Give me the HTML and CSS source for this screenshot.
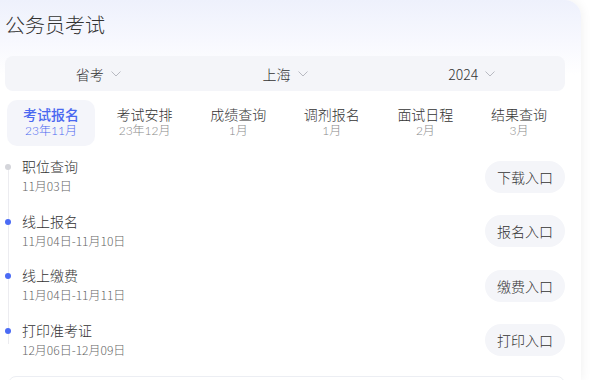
FILE: index.html
```html
<!DOCTYPE html>
<html lang="zh-CN">
<head>
  <meta charset="UTF-8">
  <meta name="viewport" content="width=device-width, initial-scale=1.0">
  <link rel="stylesheet" href="styles.css">
  <title>公务员考试</title>
</head>
<body>
  <div class="card">
    <h2 class="title">公务员考试</h2>

    <div class="filters">
      <div class="filter">省考
        <svg class="caret" viewBox="0 0 10 6"><path d="M0.5 0.5 L5 5 L9.5 0.5" /></svg>
      </div>
      <div class="filter">上海
        <svg class="caret" viewBox="0 0 10 6"><path d="M0.5 0.5 L5 5 L9.5 0.5" /></svg>
      </div>
      <div class="filter">2024
        <svg class="caret" viewBox="0 0 10 6"><path d="M0.5 0.5 L5 5 L9.5 0.5" /></svg>
      </div>
    </div>

    <div class="tabs">
      <div class="tab active">
        <div class="tab-name">考试报名</div>
        <div class="tab-date">23年11月</div>
      </div>
      <div class="tab">
        <div class="tab-name">考试安排</div>
        <div class="tab-date">23年12月</div>
      </div>
      <div class="tab">
        <div class="tab-name">成绩查询</div>
        <div class="tab-date">1月</div>
      </div>
      <div class="tab">
        <div class="tab-name">调剂报名</div>
        <div class="tab-date">1月</div>
      </div>
      <div class="tab">
        <div class="tab-name">面试日程</div>
        <div class="tab-date">2月</div>
      </div>
      <div class="tab">
        <div class="tab-name">结果查询</div>
        <div class="tab-date">3月</div>
      </div>
    </div>

    <ul class="steps">
      <li class="step">
        <span class="dot done"></span>
        <div class="step-info">
          <div class="step-name">职位查询</div>
          <div class="step-date">11月03日</div>
        </div>
        <button class="step-btn">下载入口</button>
      </li>
      <li class="step">
        <span class="dot"></span>
        <div class="step-info">
          <div class="step-name">线上报名</div>
          <div class="step-date">11月04日-11月10日</div>
        </div>
        <button class="step-btn">报名入口</button>
      </li>
      <li class="step">
        <span class="dot"></span>
        <div class="step-info">
          <div class="step-name">线上缴费</div>
          <div class="step-date">11月04日-11月11日</div>
        </div>
        <button class="step-btn">缴费入口</button>
      </li>
      <li class="step">
        <span class="dot"></span>
        <div class="step-info">
          <div class="step-name">打印准考证</div>
          <div class="step-date">12月06日-12月09日</div>
        </div>
        <button class="step-btn">打印入口</button>
      </li>
    </ul>

    <div class="more"></div>
  </div>
</body>
</html>
```

FILE: styles.css
```css
body {
  margin: 0;
  background-color: #fff;
  font-family: 'Noto Sans CJK SC', sans-serif;
  font-weight: 300;
  color: #333;
}

.card {
  width: 581px;
  box-sizing: border-box;
  padding: 11px 16px 0 5px;
  border-radius: 0 16px 0 0;
  background: linear-gradient(180deg, #eef1fc 0, #f7f8fe 40px, #fff 75px);
  box-shadow: 0 0 12px rgba(0, 0, 0, 0.07);
  overflow: hidden;
  height: 380px;
}

.title {
  margin: 0;
  font-size: 20px;
  line-height: 28px;
  font-weight: 300;
  color: #333;
}

.filters {
  display: flex;
  margin-top: 17px;
  height: 35px;
  border-radius: 8px;
  background-color: #f4f5f9;
}

.filter {
  flex: 1;
  display: flex;
  align-items: center;
  justify-content: center;
  font-size: 14px;
  color: #333;
}

.caret {
  width: 10px;
  height: 6px;
  margin-left: 7px;
  fill: none;
  stroke: #b8bac2;
  stroke-width: 1;
}

.tabs {
  display: flex;
  justify-content: space-between;
  margin-top: 9px;
  padding: 0 2px;
  font-family: 'Lato', 'Noto Sans CJK SC', sans-serif;
}

.tab {
  width: 88px;
  padding: 6px 0 8px;
  border-radius: 10px;
  text-align: center;
}

.tab-name {
  font-size: 14px;
  line-height: 18px;
  color: #333;
}

.tab-date {
  font-size: 12px;
  line-height: 14px;
  color: #888;
}

.tab.active {
  background-color: #f4f5fa;
}

.tab.active .tab-name {
  color: #4a68f0;
  font-weight: 500;
}

.tab.active .tab-date {
  color: #4a68f0;
}

.steps {
  list-style: none;
  margin: 10px 0 0;
  padding: 0;
  background: linear-gradient(#ececf0, #ececf0) no-repeat 2.5px 10px / 1px calc(100% - 40px);
}

.step {
  display: flex;
  align-items: center;
  padding-bottom: 14.5px;
}

.dot {
  align-self: flex-start;
  width: 6px;
  height: 6px;
  margin: 8px 11px 0 0;
  border-radius: 50%;
  background-color: #4b6bf5;
  flex-shrink: 0;
}

.dot.done {
  background-color: #d4d5da;
}

.step-info {
  flex: 1;
}

.step-name {
  font-size: 14px;
  line-height: 20px;
  color: #333;
}

.step-date {
  font-size: 12px;
  line-height: 20px;
  color: #666;
}

.step-btn {
  width: 80px;
  height: 32px;
  margin-top: 1px;
  border: none;
  border-radius: 16px;
  background-color: #f4f5f9;
  color: #333;
  font-family: inherit;
  font-weight: 300;
  font-size: 14px;
  cursor: pointer;
}

.more {
  margin: 2px 0 0 3px;
  height: 40px;
  border: 1px solid #eceef3;
  border-radius: 8px;
}
```
